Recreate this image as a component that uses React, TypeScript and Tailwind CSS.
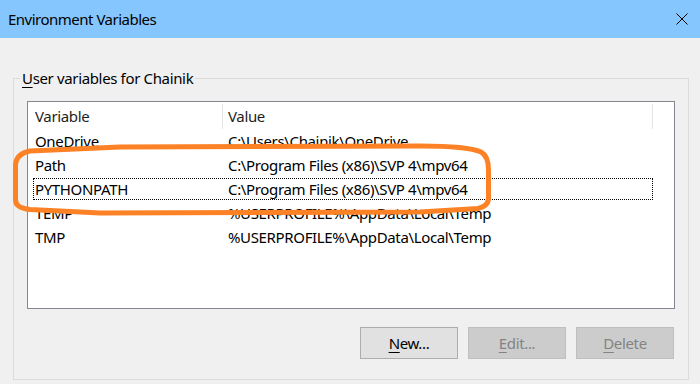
import React from "react";

const rows = [
  { name: "OneDrive", value: "C:\\Users\\Chainik\\OneDrive" },
  { name: "Path", value: "C:\\Program Files (x86)\\SVP 4\\mpv64" },
  { name: "PYTHONPATH", value: "C:\\Program Files (x86)\\SVP 4\\mpv64", focused: true },
  { name: "TEMP", value: "%USERPROFILE%\\AppData\\Local\\Temp" },
  { name: "TMP", value: "%USERPROFILE%\\AppData\\Local\\Temp" },
];

function Row({ name, value, focused }: { name: string; value: string; focused?: boolean }) {
  if (focused) {
    return (
      <div className="h-[24px] py-[1px] pl-[5px]">
        <div className="flex h-[22px] w-[620px] items-center border border-dotted border-black">
          <div className="w-[188px] pl-[1px]">{name}</div>
          <div className="pl-[6px]">{value}</div>
        </div>
      </div>
    );
  }
  return (
    <div className="flex h-[24px] items-center">
      <div className="w-[194px] pl-[7px]">{name}</div>
      <div className="pl-[6px]">{value}</div>
    </div>
  );
}

function Button({ label, disabled }: { label: string; disabled?: boolean }) {
  const [first, ...rest] = label;
  return (
    <div
      className={
        disabled
          ? "flex h-[32px] w-[98px] items-center justify-center border border-[#bfbfbf] bg-[#cccccc] text-[#838383]"
          : "flex h-[32px] w-[98px] items-center justify-center border border-[#adadad] bg-[#e1e1e1] text-black"
      }
    >
      <span>
        <span className="underline underline-offset-[3px]">{first}</span>
        {rest.join("")}
      </span>
    </div>
  );
}

export default function App() {
  return (
    <div
      className="relative h-[384px] w-[700px] overflow-hidden bg-[#f0f0f0] text-[15px] leading-[20px] tracking-[-0.35px] text-black"
      style={{ fontFamily: '"Noto Sans", "Open Sans", sans-serif' }}
    >
      <div className="flex h-[38px] items-center justify-between bg-[#85c6fe] pl-[8px] pr-[12px]">
        <span className="tracking-[-0.5px]">Environment Variables</span>
        <svg width="12" height="12" viewBox="0 0 12 12" className="block">
          <path d="M0.5 0.5 L11.5 11.5 M11.5 0.5 L0.5 11.5" stroke="#000" strokeWidth="1" fill="none" />
        </svg>
      </div>

      <div className="ml-[13px] mt-[40px] flex h-[302px] w-[676px] flex-col border border-[#dcdcdc]">
        <div className="-mt-[11px] ml-[6px] self-start bg-[#f0f0f0] px-[2px]">
          <span className="underline underline-offset-[3px]">U</span>ser variables for Chainik
        </div>

        <div className="ml-[13px] mt-[13px] h-[208px] w-[648px] border border-[#828790] bg-white">
          <div className="flex h-[27px] items-center pt-[1px]">
            <div className="w-[194px] pl-[7px] text-[#1e1e1e]">Variable</div>
            <div className="h-[25px] w-px bg-[#e5e5e5]" />
            <div className="w-[429px] pl-[5px] text-[#1e1e1e]">Value</div>
            <div className="h-[25px] w-px bg-[#e5e5e5]" />
          </div>
          {rows.map((r) => (
            <Row key={r.name} {...r} />
          ))}
        </div>

        <div className="mr-[14px] mt-[18px] flex justify-end gap-[10px]">
          <Button label="New..." />
          <Button label="Edit..." disabled />
          <Button label="Delete" disabled />
        </div>
      </div>

      <svg
        className="pointer-events-none absolute left-0 top-0"
        width="700"
        height="384"
        viewBox="0 0 700 384"
      >
        <path
          d="M15.5 200 L15.5 166 Q15.5 154 30 151 L120 147 L420 146 Q468 146 481 152 Q488.5 156 488.5 170 L488.5 198 Q488.5 206 478 208.5 L420 212 L100 213 L30 209.5 Q15.5 208 15.5 200 Z"
          fill="none"
          stroke="#fd8125"
          strokeWidth="5"
          strokeLinejoin="round"
        />
      </svg>
    </div>
  );
}
